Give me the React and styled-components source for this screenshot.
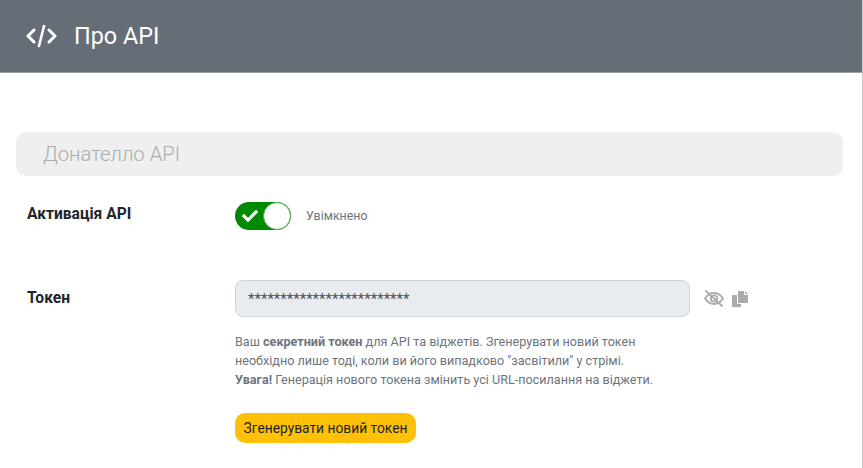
import React from 'react';
import styled, { createGlobalStyle } from 'styled-components';
import { FaCheck } from 'react-icons/fa';

const GlobalStyle = createGlobalStyle`
  html, body {
    margin: 0;
    padding: 0;
    background: #fff;
  }
  body {
    font-family: Roboto, "Noto Sans", sans-serif;
    overflow: hidden;
  }
`;

const Page = styled.div`
  width: 862px;
  height: 468px;
  border-right: 1px solid #c9cccf;
  overflow: hidden;
`;

const Header = styled.header`
  height: 73px;
  box-sizing: border-box;
  background: #656e77;
  border-bottom: 1px solid #9aa0a6;
  display: flex;
  align-items: center;
  padding-left: 26px;
  gap: 17px;
  color: #fff;
`;

const Title = styled.h1`
  margin: 0;
  font-size: 23.4px;
  font-weight: 400;
`;

const Content = styled.div`
  padding: 59px 19px 0 16px;
`;

const SectionTitle = styled.div`
  height: 44px;
  background: #efefef;
  border-radius: 10px;
  display: flex;
  align-items: center;
  padding: 0 0 0 27px;
  box-sizing: border-box;
  font-size: 20.3px;
  font-weight: 300;
  color: #a9adb1;
`;

const Row = styled.div`
  display: grid;
  grid-template-columns: 208px 1fr;
  padding-left: 11px;
  margin-top: ${({ $top }) => $top}px;
`;

const Label = styled.div`
  font-size: 15.6px;
  font-weight: 700;
  color: #212529;
  line-height: 20px;
  padding-top: ${({ $top }) => $top || 0}px;
`;

const SwitchRow = styled.div`
  display: flex;
  align-items: center;
  gap: 15px;
`;

const Switch = styled.div`
  width: 56px;
  height: 28px;
  box-sizing: border-box;
  border-radius: 14px;
  background: #008a00;
  position: relative;
  display: flex;
  align-items: center;
  padding-left: 7px;
  color: #fff;
`;

const Knob = styled.span`
  position: absolute;
  right: 0;
  top: 0;
  width: 28px;
  height: 28px;
  box-sizing: border-box;
  border-radius: 50%;
  background: #fff;
  border: 1px solid #4fae4f;
`;

const SwitchText = styled.span`
  font-size: 12.4px;
  color: #6c757d;
  margin-top: -2px;
`;

const TokenRow = styled.div`
  display: flex;
  align-items: center;
`;

const TokenInput = styled.div`
  width: 455px;
  height: 37px;
  box-sizing: border-box;
  background: #e9ecef;
  border: 1px solid #ced4da;
  border-radius: 8px;
  padding-left: 12px;
  display: flex;
  align-items: center;
  font-size: 15px;
  color: #495057;
`;

const Icons = styled.div`
  display: flex;
  align-items: center;
  gap: 7px;
  margin-left: 14px;
  color: #a9abad;
`;

const Help = styled.p`
  margin: 15px 0 0;
  font-size: 12.6px;
  line-height: 19px;
  color: #6c757d;

  b {
    font-weight: 700;
  }
`;

const YellowButton = styled.button`
  display: block;
  margin-top: 24px;
  width: 181px;
  height: 30px;
  padding: 0;
  border: none;
  border-radius: 10px;
  background: #ffc107;
  color: #212529;
  font-family: inherit;
  font-size: 13.8px;
  font-weight: 400;
`;

const CodeIcon = () => (
  <svg width="31" height="24" viewBox="0 0 31 24" fill="none" stroke="#fff" strokeWidth="3" strokeLinecap="round" strokeLinejoin="round">
    <path d="M8 6 L2 12 L8 18" />
    <path d="M23 6 L29 12 L23 18" />
    <path d="M18 2 L13 22" strokeWidth="2.6" />
  </svg>
);

const EyeOffIcon = () => (
  <svg width="20" height="17" viewBox="0 0 20 17" fill="none" stroke="currentColor" strokeWidth="1.8" strokeLinecap="round">
    <path d="M1 8.5 C4 4 7 3 10 3 C13 3 16 4 19 8.5 C16 13 13 14 10 14 C7 14 4 13 1 8.5 Z" />
    <circle cx="10" cy="8.5" r="3.2" />
    <path d="M2 1 L18 16" />
  </svg>
);

const CopyIcon = () => (
  <svg width="18" height="16" viewBox="0 0 18 16" fill="currentColor">
    <path d="M1 4 H6 V13 H10 V16 H1 Z" />
    <path d="M7 0 H13 V4 H17 V12 H7 Z" />
    <path d="M14 0 L17 3 H14 Z" />
  </svg>
);

export default function App() {
  return (
    <Page>
      <GlobalStyle />
      <Header>
        <CodeIcon />
        <Title>Про API</Title>
      </Header>
      <Content>
        <SectionTitle>Донателло API</SectionTitle>
        <Row $top={26}>
          <Label $top={2}>Активація API</Label>
          <SwitchRow>
            <Switch>
              <FaCheck size={16} />
              <Knob />
            </Switch>
            <SwitchText>Увімкнено</SwitchText>
          </SwitchRow>
        </Row>
        <Row $top={50}>
          <Label $top={8}>Токен</Label>
          <div>
            <TokenRow>
              <TokenInput>*************************</TokenInput>
              <Icons>
                <EyeOffIcon />
                <CopyIcon />
              </Icons>
            </TokenRow>
            <Help>
              Ваш <b>секретний токен</b> для API та віджетів. Згенерувати новий токен<br />
              необхідно лише тоді, коли ви його випадково "засвітили" у стрімі.<br />
              <b>Увага!</b> Генерація нового токена змінить усі URL-посилання на віджети.
            </Help>
            <YellowButton>Згенерувати новий токен</YellowButton>
          </div>
        </Row>
      </Content>
    </Page>
  );
}
